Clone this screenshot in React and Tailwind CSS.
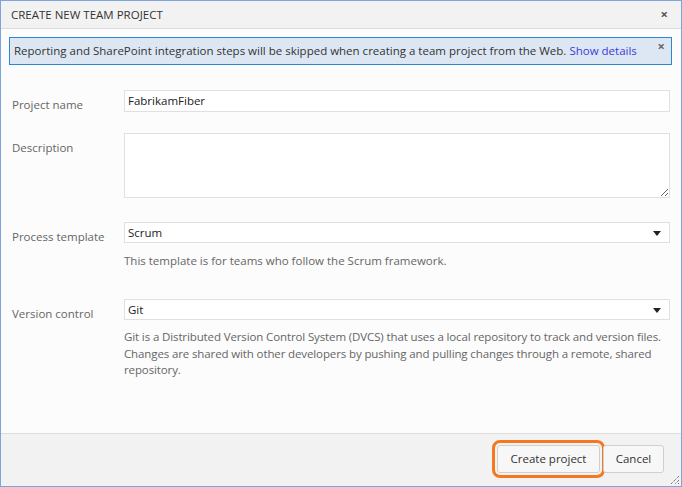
import React from 'react';

const font = { fontFamily: '"Open Sans", "Noto Sans", sans-serif' };

const Caret = () => (
  <svg width="8" height="5" viewBox="0 0 8 5" className="absolute right-[8px] top-[8px]">
    <path d="M0 0 H8 L4 5 Z" fill="#222" />
  </svg>
);

const Grip = ({ className }) => (
  <svg width="12" height="12" viewBox="0 0 12 12" className={className}>
    <path d="M11 3 L3 11 M11 7 L7 11 M11 10 L10 11" stroke="#444" strokeWidth="1" strokeDasharray="1 1" />
  </svg>
);

const Field = ({ label, children }) => (
  <div className="flex">
    <div className="w-[112px] shrink-0 text-[#666] pt-[7px] leading-[15px]">{label}</div>
    <div className="flex-1 min-w-0">{children}</div>
  </div>
);

export default function App() {
  return (
    <div
      className="relative w-[682px] h-[487px] border border-[#7ea4d8] flex flex-col text-[11.5px] text-[#333] bg-[#fcfcfc]"
      style={font}
    >
      <div className="h-[28px] shrink-0 bg-[#f2f2f2] border-b border-[#dcdcdc] flex items-center justify-between pl-[10px] pr-[13px]">
        <span>CREATE NEW TEAM PROJECT</span>
        <span className="text-[#555] font-bold text-[13px] leading-none">×</span>
      </div>

      <div className="flex-1 flex flex-col">
        <div className="mt-[8px] ml-[8px] mr-[9px] h-[28px] border border-[#2a87d6] bg-[#dde7f4] flex items-center justify-between pl-[4px] pr-[6px]">
          <span className="whitespace-nowrap">
            Reporting and SharePoint integration steps will be skipped when creating a team project from the Web.{' '}
            <span className="text-[#3b3bdb]">Show details</span>
          </span>
          <span className="text-[#666] font-bold text-[13px] leading-none self-start mt-[2px]">×</span>
        </div>

        <div className="pl-[11px] pr-[11px] pt-[25px] flex flex-col">
          <Field label="Project name">
            <div className="h-[22px] border border-[#e0e0e0] bg-white flex items-center px-[3px] text-[#222]">
              FabrikamFiber
            </div>
          </Field>

          <div className="mt-[21px]">
            <Field label="Description">
              <textarea className="block w-full h-[65px] border border-[#e0e0e0] bg-white outline-none" />
            </Field>
          </div>

          <div className="mt-[24px]">
            <Field label="Process template">
              <div className="relative h-[21px] border border-[#e0e0e0] bg-white flex items-center px-[3px] text-[#222]">
                Scrum
                <Caret />
              </div>
              <div className="mt-[10px] text-[#666] leading-[16px]">
                This template is for teams who follow the Scrum framework.
              </div>
            </Field>
          </div>

          <div className="mt-[30px]">
            <Field label="Version control">
              <div className="relative h-[21px] border border-[#e0e0e0] bg-white flex items-center px-[3px] text-[#222]">
                Git
                <Caret />
              </div>
              <div className="mt-[9px] text-[#666] leading-[16.5px] tracking-[-0.12px] whitespace-nowrap">
                Git is a Distributed Version Control System (DVCS) that uses a local repository to track and version files.
                <br />
                Changes are shared with other developers by pushing and pulling changes through a remote, shared
                <br />
                repository.
              </div>
            </Field>
          </div>
        </div>
      </div>

      <div className="h-[53px] shrink-0 bg-[#f2f2f2] border-t border-[#dcdcdc] flex justify-end items-start pt-[11px] pr-[17px] gap-[3px]">
        <button className="h-[28px] w-[103px] rounded-[3px] border border-[#d0d0d0] bg-[#f7f7f7] text-[#333] outline-[3px] outline-solid outline-offset-[2px] outline-[#f5781e]">
          Create project
        </button>
        <button className="h-[28px] w-[61px] rounded-[3px] border border-[#d0d0d0] bg-[#f7f7f7] text-[#333]">
          Cancel
        </button>
      </div>

      <Grip className="absolute right-[1px] bottom-[1px]" />
    </div>
  );
}
